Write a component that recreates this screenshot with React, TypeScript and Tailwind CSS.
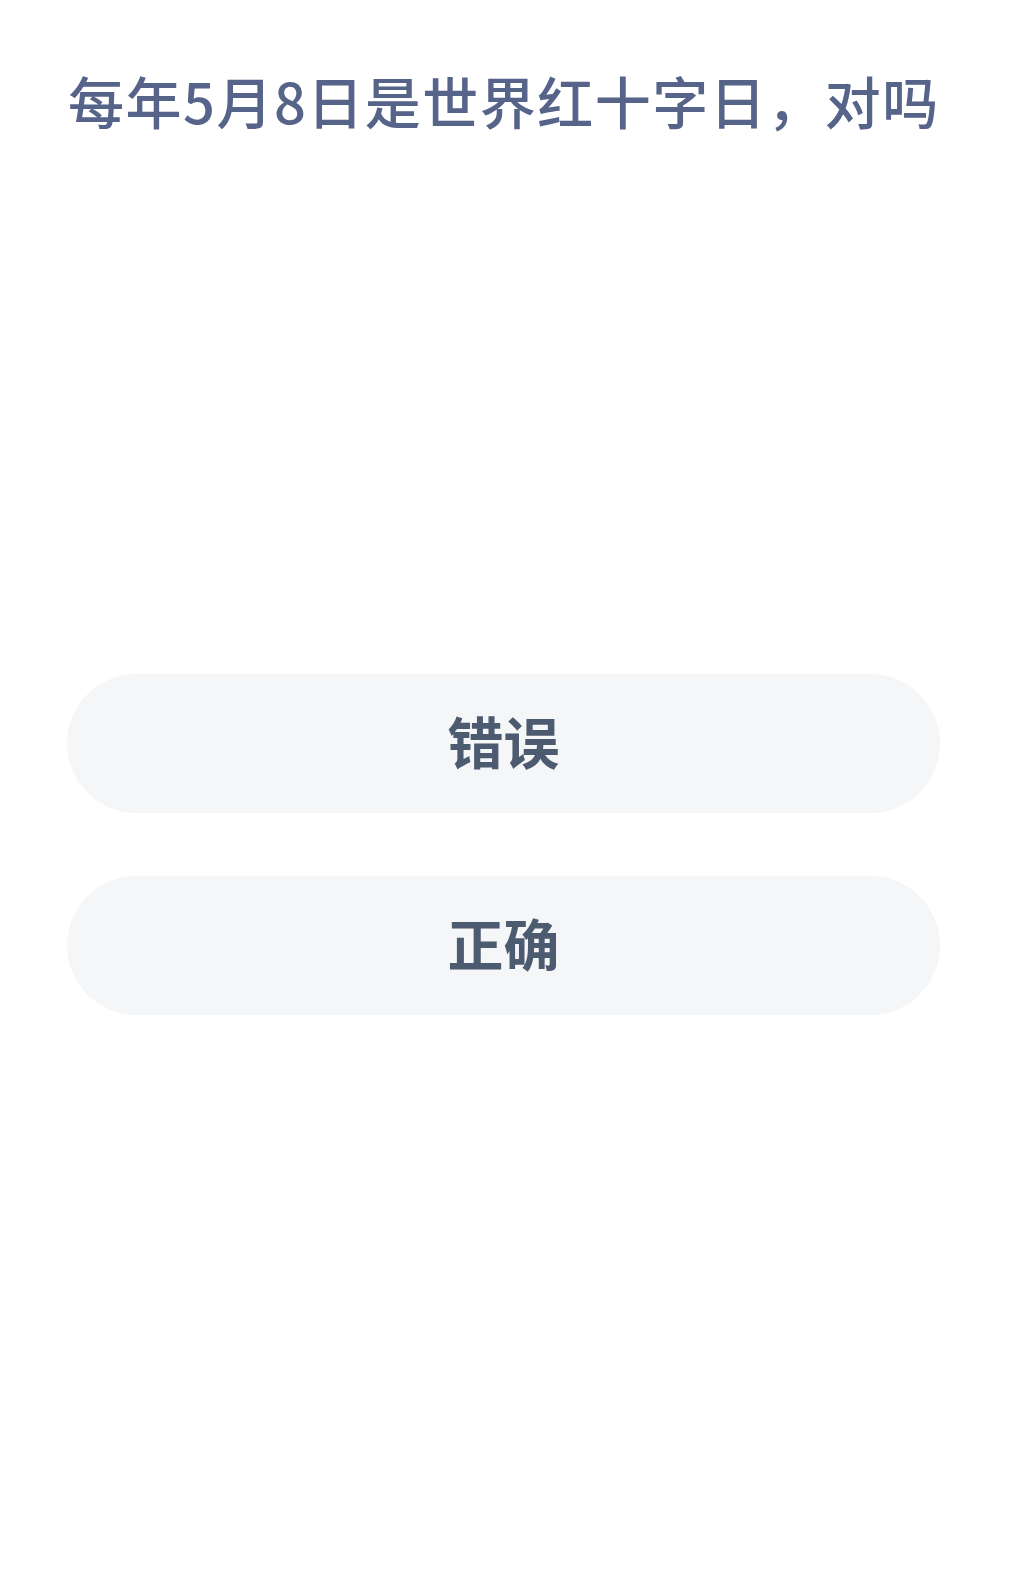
export default function App() {
  return (
    <div
      className="w-[1024px] h-[1580px] bg-white flex flex-col"
      style={{ fontFamily: '"Noto Sans CJK SC", "Noto Sans", sans-serif' }}
    >
      <div className="pl-[68px] pt-[64px] h-[674px]">
        <h1 className="text-[56px] leading-[72px] font-medium text-[#56648a] tracking-[1.5px] whitespace-nowrap">
          每年5月8日是世界红十字日，对吗
        </h1>
      </div>
      <div className="flex flex-col gap-[63px] pl-[67px] pr-[84px]">
        <button className="h-[139px] w-full rounded-full bg-[#f4f6f8] text-[56px] leading-[56px] font-bold text-[#4d5b70] flex items-center justify-center pb-[8px]">
          错误
        </button>
        <button className="h-[139px] w-full rounded-full bg-[#f4f6f8] text-[56px] leading-[56px] font-bold text-[#4d5b70] flex items-center justify-center pb-[8px]">
          正确
        </button>
      </div>
    </div>
  );
}
